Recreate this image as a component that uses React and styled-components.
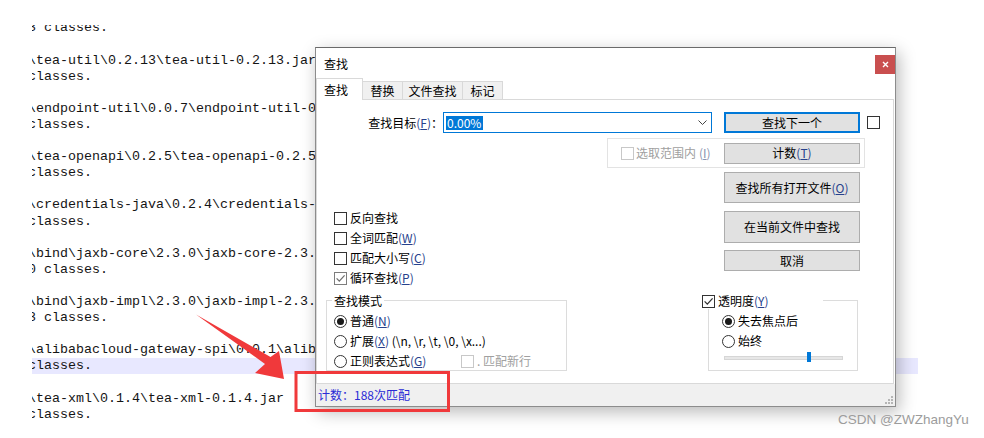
import React from 'react';
import styled, { createGlobalStyle } from 'styled-components';

const UI_FONT = `"Noto Sans CJK SC", "Noto Sans", sans-serif`;

const GlobalStyle = createGlobalStyle`
  html, body {
    margin: 0;
    padding: 0;
    background: #fff;
  }
  body {
    width: 984px;
    height: 438px;
    overflow: hidden;
  }
`;

const Stage = styled.div`
  position: relative;
  width: 984px;
  height: 438px;
  box-sizing: border-box;
  padding: 25px 0 0 32px;
  overflow: hidden;
  background: #fff;
`;

/* background editor */

const Editor = styled.div`
  width: 886px;
  height: 405px;
  overflow: hidden;
  font-family: "Liberation Mono", "DejaVu Sans Mono", monospace;
  font-size: 13.33px;
  color: #141414;
`;

const Lines = styled.div`
  margin-top: -4.6px;
`;

const Line = styled.div`
  height: 16.1px;
  line-height: 16.1px;
  white-space: pre;
  text-indent: -4px;
  background: ${(p) => (p.$current ? '#e8e8ff' : 'transparent')};
`;

const editorLines = [
  String.raw`3 classes.`,
  ``,
  String.raw`\tea-util\0.2.13\tea-util-0.2.13.jar`,
  String.raw`classes.`,
  ``,
  String.raw`\endpoint-util\0.0.7\endpoint-util-0.0.7.jar`,
  String.raw`classes.`,
  ``,
  String.raw`\tea-openapi\0.2.5\tea-openapi-0.2.5.jar`,
  String.raw`classes.`,
  ``,
  String.raw`\credentials-java\0.2.4\credentials-java-0.2.4.jar`,
  String.raw`classes.`,
  ``,
  String.raw`\bind\jaxb-core\2.3.0\jaxb-core-2.3.0.jar`,
  String.raw`0 classes.`,
  ``,
  String.raw`\bind\jaxb-impl\2.3.0\jaxb-impl-2.3.0.jar`,
  String.raw`3 classes.`,
  ``,
  String.raw`\alibabacloud-gateway-spi\0.0.1\alibabacloud-gateway-spi-0.0.1.jar`,
  String.raw`classes.`,
  ``,
  String.raw`\tea-xml\0.1.4\tea-xml-0.1.4.jar`,
  String.raw`classes.`,
];

/* find dialog */

const Dialog = styled.div`
  position: absolute;
  left: 315px;
  top: 47px;
  width: 581px;
  height: 360px;
  box-sizing: border-box;
  border: 1px solid #8c8c8c;
  border-top-color: #6a6a6a;
  background: #fff;
  box-shadow: 3px 5px 16px rgba(0, 0, 0, 0.28);
  display: flex;
  flex-direction: column;
  font-family: ${UI_FONT};
  font-size: 12px;
  color: #000;
  z-index: 2;
`;

const TitleBar = styled.div`
  height: 30px;
  flex: none;
  display: flex;
  align-items: center;
  justify-content: space-between;
  padding-left: 8px;
`;

const CloseButton = styled.div`
  align-self: flex-start;
  margin-top: 7px;
  width: 20px;
  height: 19px;
  background: #c94f4f;
  display: flex;
  align-items: center;
  justify-content: center;
`;

const TabStrip = styled.div`
  height: 21px;
  flex: none;
  display: flex;
  align-items: flex-end;
  position: relative;
  z-index: 1;
`;

const Tab = styled.div`
  box-sizing: border-box;
  width: ${(p) => p.$w}px;
  height: ${(p) => (p.$active ? 22 : 18)}px;
  margin-bottom: ${(p) => (p.$active ? -1 : 0)}px;
  border: 1px solid #d9d9d9;
  border-bottom: none;
  border-left: ${(p) => (p.$active ? '1px solid #d9d9d9' : 'none')};
  background: ${(p) => (p.$active ? '#fff' : '#f0f0f0')};
  display: flex;
  align-items: center;
  justify-content: ${(p) => (p.$active ? 'flex-start' : 'center')};
  padding-left: ${(p) => (p.$active ? 7 : 0)}px;
  line-height: 16px;
`;

const Panel = styled.div`
  box-sizing: border-box;
  width: 578px;
  height: 285px;
  flex: none;
  border: 1px solid #d9d9d9;
  background: #fff;
  padding-top: 12px;
`;

const TargetRow = styled.div`
  display: flex;
  align-items: center;
  height: 21px;
`;

const FieldLabel = styled.div`
  width: 126px;
  text-align: right;
  line-height: 16px;
  white-space: nowrap;
`;

const Combo = styled.div`
  box-sizing: border-box;
  width: 269px;
  height: 21px;
  border: 1px solid #0078d7;
  display: flex;
  align-items: center;
  justify-content: space-between;
  padding: 0 4px 0 2px;
`;

const Selection = styled.span`
  background: #0078d7;
  color: #fff;
  line-height: 14px;
  padding: 0 2px 0 1px;
`;

const Button = styled.div`
  box-sizing: border-box;
  width: 136px;
  height: ${(p) => p.$h}px;
  flex: none;
  margin-left: ${(p) => p.$ml || 0}px;
  margin-top: ${(p) => p.$mt || 0}px;
  border: ${(p) => (p.$primary ? '2px solid #0078d7' : '1px solid #adadad')};
  background: #e1e1e1;
  display: flex;
  align-items: center;
  justify-content: center;
  line-height: 16px;
  white-space: nowrap;
`;

const ScopeBox = styled.div`
  box-sizing: border-box;
  margin: 5px 0 0 290px;
  width: 258px;
  height: 30px;
  border: 1px solid #e3e3e3;
  display: flex;
  align-items: center;
  padding: 0 4px 0 13px;
  gap: 2px;

  & > ${Button} {
    margin-left: auto;
  }
`;

const Lower = styled.div`
  display: flex;
  margin-top: 4px;
`;

const LeftCol = styled.div`
  width: 241px;
  margin-left: 9px;
  display: flex;
  flex-direction: column;
`;

const RightCol = styled.div`
  margin-left: 135px;
  display: flex;
  flex-direction: column;
`;

const CheckList = styled.div`
  margin-top: 36px;
  padding-left: 8px;
`;

const Item = styled.div`
  height: 20px;
  display: flex;
  align-items: center;
  gap: 3px;
  line-height: 16px;
  white-space: nowrap;
  color: ${(p) => (p.$disabled ? '#a0a0a0' : '#000')};
`;

const Group = styled.div`
  position: relative;
  box-sizing: border-box;
  width: ${(p) => p.$w}px;
  height: 71px;
  margin-top: ${(p) => p.$mt}px;
  margin-left: ${(p) => p.$ml || 0}px;
  border: 1px solid #dcdcdc;
  padding: 10px 0 0 ${(p) => p.$pl}px;
`;

const Legend = styled.div`
  position: absolute;
  top: ${(p) => p.$top}px;
  left: ${(p) => p.$left}px;
  width: ${(p) => (p.$w ? `${p.$w}px` : 'auto')};
  box-sizing: border-box;
  padding: 0 2px;
  background: #fff;
  display: flex;
  align-items: center;
  gap: 3px;
  line-height: 16px;
`;

const CheckBox = styled.span`
  box-sizing: border-box;
  width: 13px;
  height: 13px;
  flex: none;
  margin-left: ${(p) => p.$ml || 0}px;
  border: 1px solid
    ${(p) => (p.$disabled ? '#c8c8c8' : p.$dim ? '#7d7d7d' : '#333')};
  background: #fff;
  display: inline-flex;
  align-items: center;
  justify-content: center;
`;

const RadioRing = styled.span`
  box-sizing: border-box;
  width: 13px;
  height: 13px;
  flex: none;
  border: 1px solid #333;
  border-radius: 50%;
  background: #fff;
  display: inline-flex;
  align-items: center;
  justify-content: center;

  &::after {
    content: '';
    width: 7px;
    height: 7px;
    border-radius: 50%;
    background: #1a1a1a;
    display: ${(p) => (p.$on ? 'block' : 'none')};
  }
`;

const KeyText = styled.span`
  color: ${(p) => (p.$disabled ? '#8a94b0' : '#27418c')};

  & u {
    text-underline-offset: 1px;
  }
`;

const RegexLabel = styled.span`
  width: 108px;
  flex: none;
`;

const Slider = styled.div`
  position: relative;
  margin: 1px 0 0 2px;
  width: 119px;
  height: 10px;
`;

const Track = styled.div`
  position: absolute;
  left: 0;
  right: 0;
  top: 4px;
  height: 4px;
  box-sizing: border-box;
  background: #e7e7e7;
  border: 1px solid #d6d6d6;
`;

const Thumb = styled.div`
  position: absolute;
  left: 83px;
  top: 0;
  width: 4px;
  height: 10px;
  background: #0078d7;
`;

const StatusBar = styled.div`
  position: relative;
  flex: 1;
  background: #f0f0f0;
  display: flex;
  align-items: center;
  padding-left: 2px;
  color: #2b2bd6;
  line-height: 16px;
`;

const Grip = styled.svg`
  position: absolute;
  right: 1px;
  bottom: 1px;
`;

/* annotation layer */

const Overlay = styled.svg`
  position: absolute;
  left: 0;
  top: 0;
  z-index: 3;
  pointer-events: none;
`;

const Watermark = styled.div`
  position: absolute;
  left: 838px;
  top: 411px;
  font-family: "Liberation Sans", Arial, sans-serif;
  font-size: 13.5px;
  line-height: 18px;
  color: #9c9c9c;
  white-space: nowrap;
  z-index: 3;
`;

const Key = ({ k, disabled }) => (
  <KeyText $disabled={disabled}>
    (<u>{k}</u>)
  </KeyText>
);

function Check({ on, disabled, dim, ml }) {
  return (
    <CheckBox $disabled={disabled} $dim={dim} $ml={ml}>
      {on && (
        <svg width="11" height="11" viewBox="0 0 11 11">
          <path
            d="M1.6 5.4 L4.3 8.1 L9.6 2.4"
            fill="none"
            stroke={dim ? '#707070' : '#333'}
            strokeWidth="1.3"
          />
        </svg>
      )}
    </CheckBox>
  );
}

const tabs = [
  { label: '查找', w: 47, active: true },
  { label: '替换', w: 40 },
  { label: '文件查找', w: 60 },
  { label: '标记', w: 40 },
];

const gripDots = [
  [8, 2],
  [8, 5],
  [5, 5],
  [8, 8],
  [5, 8],
  [2, 8],
];

export default function App() {
  return (
    <>
      <GlobalStyle />
      <Stage>
        <Editor>
          <Lines>
            {editorLines.map((text, i) => (
              <Line key={i} $current={i === 21}>
                {text || ' '}
              </Line>
            ))}
          </Lines>
        </Editor>

        <Dialog>
          <TitleBar>
            <span>查找</span>
            <CloseButton>
              <svg width="7" height="7" viewBox="0 0 7 7">
                <path d="M1 1 L6 6 M6 1 L1 6" stroke="#fff" strokeWidth="1.4" />
              </svg>
            </CloseButton>
          </TitleBar>

          <TabStrip>
            {tabs.map((t) => (
              <Tab key={t.label} $w={t.w} $active={t.active}>
                {t.label}
              </Tab>
            ))}
          </TabStrip>

          <Panel>
            <TargetRow>
              <FieldLabel>
                查找目标<Key k="F" />：
              </FieldLabel>
              <Combo>
                <Selection>0.00%</Selection>
                <svg width="9" height="5" viewBox="0 0 9 5">
                  <path d="M0.5 0.5 L4.5 4.5 L8.5 0.5" fill="none" stroke="#444" strokeWidth="1" />
                </svg>
              </Combo>
              <Button $h={21} $ml={12} $primary>
                查找下一个
              </Button>
              <Check ml={7} />
            </TargetRow>

            <ScopeBox>
              <Check disabled />
              <Item $disabled>
                选取范围内<Key k="I" disabled />
              </Item>
              <Button $h={21}>
                计数<Key k="T" />
              </Button>
            </ScopeBox>

            <Lower>
              <LeftCol>
                <CheckList>
                  <Item>
                    <Check />
                    反向查找
                  </Item>
                  <Item>
                    <Check />
                    <span>
                      全词匹配<Key k="W" />
                    </span>
                  </Item>
                  <Item>
                    <Check />
                    <span>
                      匹配大小写<Key k="C" />
                    </span>
                  </Item>
                  <Item>
                    <Check on dim />
                    <span>
                      循环查找<Key k="P" />
                    </span>
                  </Item>
                </CheckList>

                <Group $w={241} $mt={12} $pl={7}>
                  <Legend $top={-8} $left={5}>
                    查找模式
                  </Legend>
                  <Item>
                    <RadioRing $on />
                    <span>
                      普通<Key k="N" />
                    </span>
                  </Item>
                  <Item>
                    <RadioRing />
                    <span>
                      扩展<Key k="X" /> {'(\\n, \\r, \\t, \\0, \\x...)'}
                    </span>
                  </Item>
                  <Item>
                    <RadioRing />
                    <RegexLabel>
                      正则表达式<Key k="G" />
                    </RegexLabel>
                    <Check disabled />
                    <Item as="span" $disabled>
                      . 匹配新行
                    </Item>
                  </Item>
                </Group>
              </LeftCol>

              <RightCol>
                <Button $h={31} $ml={22}>
                  查找所有打开文件<Key k="O" />
                </Button>
                <Button $h={32} $ml={22} $mt={8}>
                  在当前文件中查找
                </Button>
                <Button $h={21} $ml={22} $mt={7}>
                  取消
                </Button>

                <Group $w={150} $mt={29} $ml={6} $pl={13}>
                  <Legend $top={-8} $left={-9} $w={123}>
                    <Check on />
                    <span>
                      透明度<Key k="Y" />
                    </span>
                  </Legend>
                  <Item>
                    <RadioRing $on />
                    失去焦点后
                  </Item>
                  <Item>
                    <RadioRing />
                    始终
                  </Item>
                  <Slider>
                    <Track />
                    <Thumb />
                  </Slider>
                </Group>
              </RightCol>
            </Lower>
          </Panel>

          <StatusBar>
            计数：188次匹配
            <Grip width="10" height="10" viewBox="0 0 10 10">
              {gripDots.map(([x, y]) => (
                <rect key={`${x}-${y}`} x={x - 1} y={y - 1} width="2" height="2" fill="#b5b5b5" />
              ))}
            </Grip>
          </StatusBar>
        </Dialog>

        <Overlay width="984" height="438" viewBox="0 0 984 438">
          <polygon
            points="196,314.5 270.5,357 279,351 284,379 255,373 265,364"
            fill="#f0393b"
          />
          <rect
            x="296"
            y="372.5"
            width="152.5"
            height="38"
            fill="none"
            stroke="#f0393b"
            strokeWidth="3"
          />
        </Overlay>

        <Watermark>CSDN @ZWZhangYu</Watermark>
      </Stage>
    </>
  );
}
